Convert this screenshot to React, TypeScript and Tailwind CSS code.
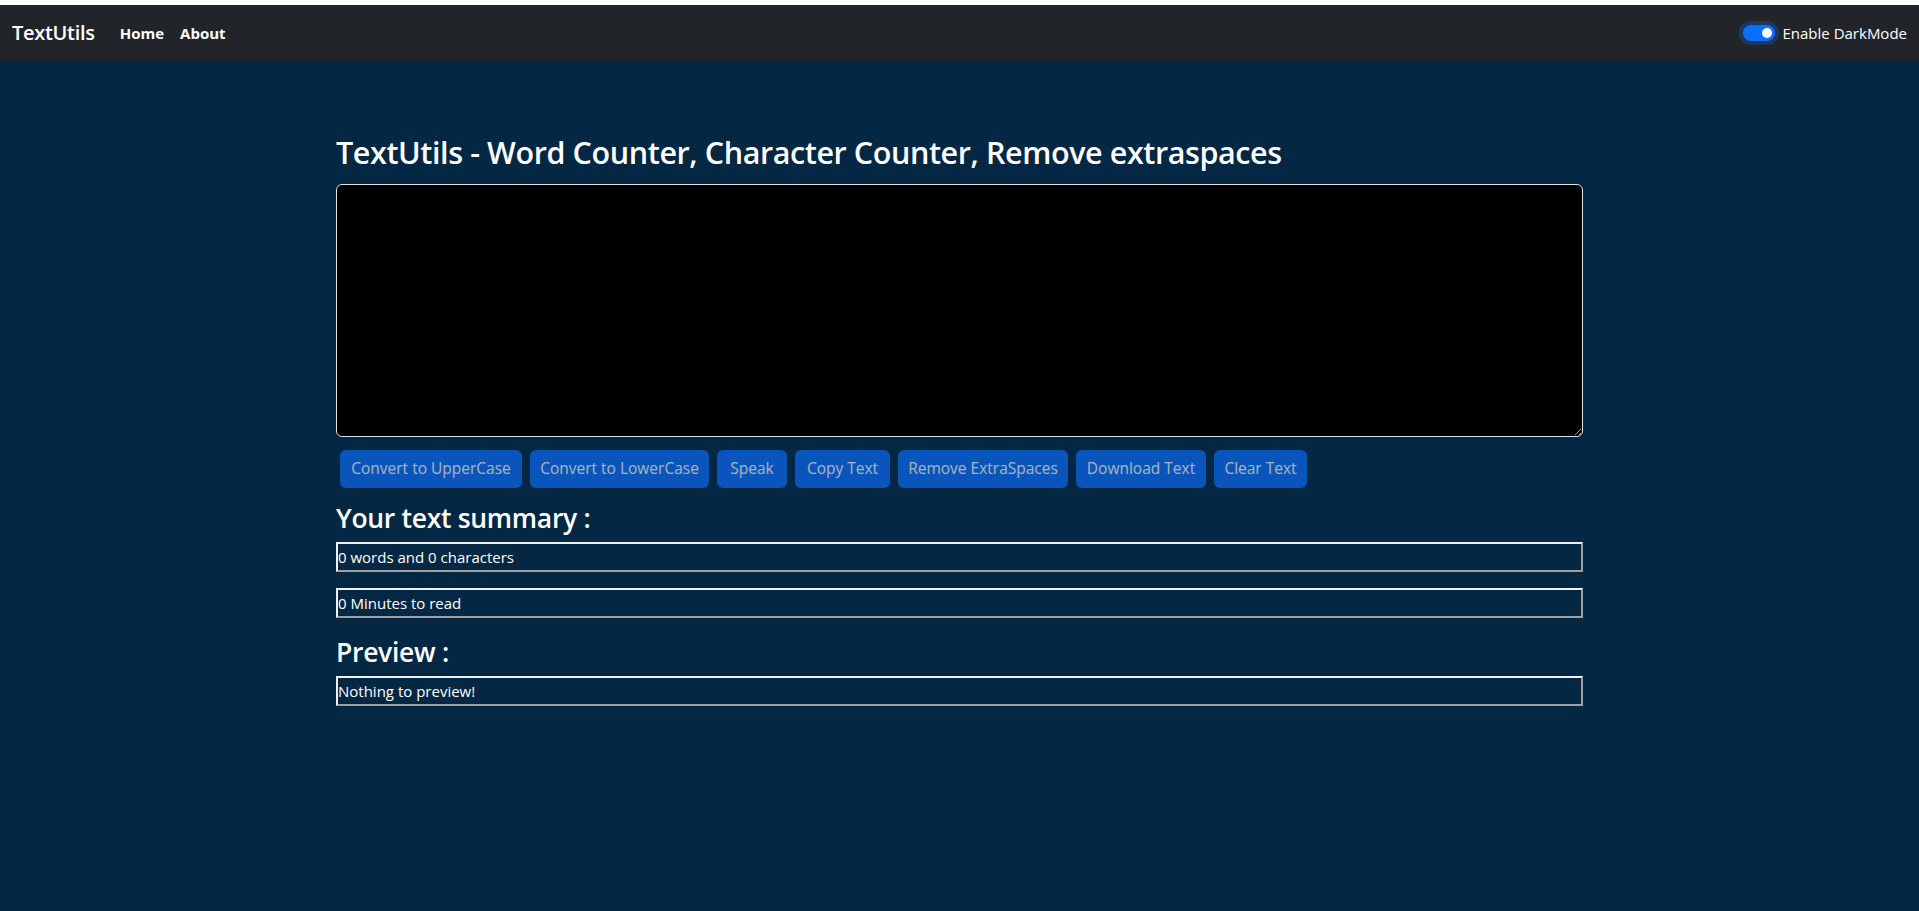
import React, { useState } from 'react';

const font = "font-['Open_Sans','Noto_Sans',sans-serif]";

// widths measured from the design
const buttons = [
  { label: 'Convert to UpperCase', w: 'w-[182px]' },
  { label: 'Convert to LowerCase', w: 'w-[179px]' },
  { label: 'Speak', w: 'w-[70px]' },
  { label: 'Copy Text', w: 'w-[95px]' },
  { label: 'Remove ExtraSpaces', w: 'w-[170px]' },
  { label: 'Download Text', w: 'w-[130px]' },
  { label: 'Clear Text', w: 'w-[93px]' },
];

const Navbar: React.FC<{ dark: boolean; onToggle: () => void }> = ({ dark, onToggle }) => (
  <nav className="h-[56px] bg-[#212529] flex items-center justify-between px-3">
    <div className="flex items-center">
      <a className="text-white text-[20px] font-semibold mr-[25px] tracking-[-0.3px]">TextUtils</a>
      <ul className="flex items-center gap-[16px] text-white text-[15px] font-bold">
        <li>Home</li>
        <li>About</li>
      </ul>
    </div>
    <label className="flex items-center gap-[8px] text-white text-[15px] cursor-pointer">
      <span
        onClick={onToggle}
        className={`relative w-[32px] h-[16px] rounded-full shadow-[0_0_0_4px_rgba(13,110,253,0.25)] ${dark ? 'bg-[#0d6efd]' : 'bg-white border border-gray-400'}`}
      >
        <span className={`absolute top-[3px] w-[10px] h-[10px] rounded-full ${dark ? 'right-[3px] bg-white' : 'left-[3px] bg-gray-400'}`} />
      </span>
      Enable DarkMode
    </label>
  </nav>
);

const SummaryBox: React.FC<{ children: React.ReactNode; className?: string }> = ({ children, className }) => (
  <p className={`h-[30px] border-2 border-t-[#f0f0f0] border-l-[#f0f0f0] border-r-[#a0a0a0] border-b-[#a0a0a0] text-white text-[15px] leading-[26px] ${className ?? ''}`}>
    {children}
  </p>
);

export default function App() {
  const [dark, setDark] = useState(true);
  const [text, setText] = useState('');

  const words = text.split(/\s+/).filter((w) => w.length > 0).length;

  return (
    <div className={`min-h-[911px] bg-[#042743] border-t-[5px] border-white ${font}`}>
      <Navbar dark={dark} onToggle={() => setDark(!dark)} />

      <div className="w-[1247px] mx-auto pt-[72px]">
        <h1 className="text-white text-[30.5px] font-semibold leading-[38px] mb-[13px] tracking-[-0.4px]">
          TextUtils - Word Counter, Character Counter, Remove extraspaces
        </h1>
        <textarea
          value={text}
          onChange={(e) => setText(e.target.value)}
          className="block w-full h-[253px] bg-black text-white border border-[#dee2e6] rounded-[6px] px-3 py-2 outline-none"
        />

        <div className="flex flex-wrap gap-[8px] mt-[13px] px-[4px]">
          {buttons.map((b) => (
            <button
              key={b.label}
              disabled={text.length === 0}
              className={`h-[38px] ${b.w} rounded-[6px] bg-[#0d6efd] text-white text-[15.5px] opacity-65`}
            >
              {b.label}
            </button>
          ))}
        </div>

        <h2 className="text-white text-[26.5px] font-semibold leading-[32px] mt-[14px] mb-[8px] tracking-[-0.3px]">
          Your text summary :
        </h2>
        <SummaryBox className="mb-[16px]">
          {words} words and {text.length} characters
        </SummaryBox>
        <SummaryBox>{(0.008 * words).toFixed(0)} Minutes to read</SummaryBox>

        <h2 className="text-white text-[26.5px] font-semibold leading-[32px] mt-[18px] mb-[8px] tracking-[-0.3px]">
          Preview :
        </h2>
        <SummaryBox>{text.length > 0 ? text : 'Nothing to preview!'}</SummaryBox>
      </div>
    </div>
  );
}
